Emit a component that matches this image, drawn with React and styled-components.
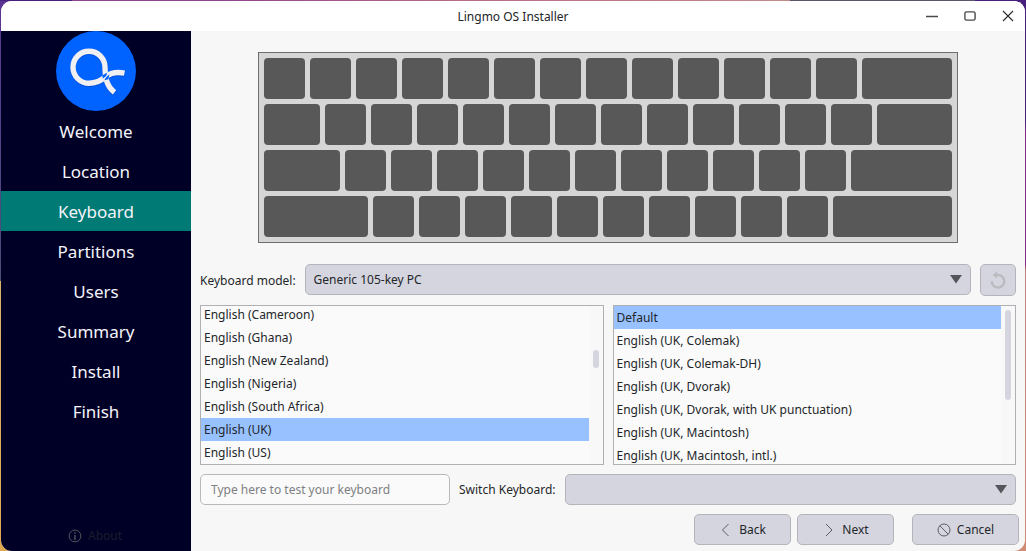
import React, { useState } from "react";
import styled, { createGlobalStyle } from "styled-components";

const GlobalStyle = createGlobalStyle`
  *, *::before, *::after { box-sizing: border-box; }
  body {
    margin: 0;
    font: 12px/17px "Noto Sans", "Open Sans", sans-serif;
    color: #232629;
  }
  button, input, select { font: inherit; color: inherit; }
`;

const Desktop = styled.div`
  min-height: 100vh;
  display: flex;
  padding: 1px 1px 0;
  background:
    linear-gradient(90deg, #46207a 0 7%, #8c4690 7% 22%, #b86c86 45%, #c08a8a 77%, #5c5468 77% 95%, #46207a 95%) top / 100% 1px no-repeat,
    linear-gradient(#5a3494, #4a5078 51%, #d8b468 51%, #e0a850) left / 50% 100% no-repeat,
    linear-gradient(#46207a 22%, #86288a 24% 48%, #c08078 49%, #d08c74) right / 50% 100% no-repeat;
`;

const Window = styled.div`
  flex: 1;
  min-width: 0;
  display: flex;
  flex-direction: column;
  overflow: hidden;
  border-radius: 11px;
  background: #f7f7f7;
`;

const TitleBar = styled.header`
  display: grid;
  grid-template-columns: 1fr auto 1fr;
  align-items: center;
  height: 30px;
  background: #fff;
`;

const Title = styled.h1`
  grid-column: 2;
  margin: 0;
  font-size: 12px;
  font-weight: 400;
`;

const WindowControls = styled.div`
  display: flex;
  justify-content: flex-end;
  gap: 4px;
`;

const ControlButton = styled.button`
  display: grid;
  place-items: center;
  width: 34px;
  height: 30px;
  padding: 0;
  border: 0;
  background: none;
`;

const Body = styled.div`
  flex: 1;
  display: flex;
`;

const Sidebar = styled.aside`
  flex: none;
  width: 190px;
  display: flex;
  flex-direction: column;
  align-items: center;
  background: #000026;
`;

const Steps = styled.ol`
  align-self: stretch;
  margin: 0;
  padding: 0;
  list-style: none;
`;

const Step = styled.li`
  height: 40px;
  line-height: 41px;
  font-size: 17px;
  text-align: center;
  color: #f4f4fa;
  background: ${(p) => (p.$current ? "#007a74" : "transparent")};
`;

const AboutButton = styled.button`
  display: flex;
  align-items: center;
  gap: 6px;
  height: 31px;
  margin-top: auto;
  padding: 0 2px 0 0;
  border: 0;
  background: none;
  color: #1d1d2b;
`;

const Page = styled.main`
  flex: 1;
  min-width: 0;
  display: flex;
  flex-direction: column;
  gap: 9px;
  padding: 21px 9px 6px;
`;

const Keyboard = styled.div`
  align-self: center;
  width: 700px;
  max-width: 100%;
  display: flex;
  flex-direction: column;
  gap: 5px;
  margin-bottom: 12px;
  padding: 5px;
  border: 1px solid #6e6e6e;
  background: #d6d6d6;
`;

const KeyRow = styled.div`
  display: flex;
  gap: 5px;
`;

const Key = styled.span`
  flex: ${(p) => (p.$fill ? "1 1 0" : "0 1 auto")};
  width: ${(p) => p.$width || 41}px;
  height: 41px;
  border-radius: 4px;
  background: #585858;
`;

const FormRow = styled.div`
  display: flex;
  align-items: center;
  gap: 9px;
`;

const SelectBox = styled.div`
  position: relative;
  flex: 1;
  height: ${(p) => p.$height}px;

  svg {
    position: absolute;
    right: 9px;
    top: 10px;
    pointer-events: none;
  }
`;

const Select = styled.select`
  display: block;
  appearance: none;
  width: 100%;
  height: 31px;
  padding: 0 28px 0 8px;
  border: 1px solid #b4b4ba;
  border-radius: 5px;
  background: #d5d5df;
`;

const TextInput = styled.input`
  width: 250px;
  height: 31px;
  padding: 0 10px;
  border: 1px solid #b9b9b9;
  border-radius: 5px;
  background: #fafafa;

  &::placeholder { color: #7d7f82; opacity: 1; }
`;

const Button = styled.button`
  display: flex;
  align-items: center;
  justify-content: center;
  gap: 6px;
  width: ${(p) => p.$width}px;
  height: ${(p) => p.$height || 31}px;
  padding: 0;
  border: 1px solid #b4b4ba;
  border-radius: 5px;
  background: #d5d5df;
`;

const Lists = styled.div`
  display: grid;
  grid-template-columns: 1fr 1fr;
  gap: 9px;
`;

const ListFrame = styled.div`
  display: flex;
  height: 160px;
  border: 1px solid #b0b0b2;
  background: #fafafa;
`;

const Options = styled.ul`
  flex: 1;
  display: flex;
  flex-direction: column;
  justify-content: ${(p) => (p.$scrolled ? "flex-end" : "flex-start")};
  margin: 0;
  padding: 0;
  overflow: hidden;
  list-style: none;
`;

const Option = styled.li`
  flex: none;
  height: 23px;
  padding: 0 3px;
  line-height: 23px;
  background: ${(p) => (p["aria-selected"] ? "#97c1ff" : "transparent")};
`;

const Track = styled.div`
  width: 14px;
  padding: ${(p) => p.$offset}px 4px 0;
  background: #f8f8f8;
`;

const Thumb = styled.div`
  height: ${(p) => p.$length}px;
  border-radius: 3px;
  background: #d5d5df;
`;

const Actions = styled.footer`
  display: flex;
  justify-content: flex-end;
  gap: 6px;
  margin-right: -3px;

  button:last-child { margin-left: 12px; }
`;

const steps = ["Welcome", "Location", "Keyboard", "Partitions", "Users", "Summary", "Install", "Finish"];

const keyRows = [
  { first: 41, count: 12 },
  { first: 56, count: 12 },
  { first: 76, count: 11 },
  { first: 104, count: 10 },
];

const layouts = [
  "English (Cameroon)",
  "English (Ghana)",
  "English (New Zealand)",
  "English (Nigeria)",
  "English (South Africa)",
  "English (UK)",
  "English (US)",
];

const variants = [
  "Default",
  "English (UK, Colemak)",
  "English (UK, Colemak-DH)",
  "English (UK, Dvorak)",
  "English (UK, Dvorak, with UK punctuation)",
  "English (UK, Macintosh)",
  "English (UK, Macintosh, intl.)",
];

function Icon({ width = 14, height = 14, stroke = "#5b5d63", strokeWidth = 1, children }) {
  return (
    <svg width={width} height={height} viewBox={`0 0 ${width} ${height}`} fill="none" stroke={stroke} strokeWidth={strokeWidth} aria-hidden="true">
      {children}
    </svg>
  );
}

function Arrow() {
  return (
    <svg width="12" height="10" viewBox="0 0 12 10" aria-hidden="true">
      <path d="M0 1h12L6 9.5z" fill="#55565c" />
    </svg>
  );
}

const ribbon = "M68.5 42.2C61 40.6 55 41.8 50 45.4C45 49.8 40.5 52.3 33 52.3A16 16 0 1 1 49 36.3C49.2 48 51 55.5 58.5 61.3";

function Logo() {
  return (
    <svg width="80" height="80" viewBox="0 0 80 80" fill="none" role="img" aria-label="Lingmo OS">
      <circle cx="40" cy="40" r="40" fill="#0062ff" />
      <path d={ribbon} stroke="#0048c4" strokeWidth="5.6" opacity="0.6" transform="translate(0 1)" />
      <path d={ribbon} stroke="#f0f0f2" strokeWidth="5.4" />
      <path d="M46.2 44.4L51.3 41.6L50 45.2L46.8 47.4z M50.4 46L53.4 43.2L52.4 48.2L48.2 49.2z" fill="#0062ff" />
    </svg>
  );
}

function OptionList({ label, items, value, onChange, scrolled, offset, length }) {
  return (
    <ListFrame>
      <Options role="listbox" aria-label={label} tabIndex={0} $scrolled={scrolled}>
        {items.map((item) => (
          <Option key={item} role="option" aria-selected={item === value} onClick={() => onChange(item)}>
            {item}
          </Option>
        ))}
      </Options>
      <Track $offset={offset}>
        <Thumb $length={length} />
      </Track>
    </ListFrame>
  );
}

export default function App() {
  const [layout, setLayout] = useState("English (UK)");
  const [variant, setVariant] = useState("Default");

  return (
    <Desktop>
      <GlobalStyle />
      <Window>
        <TitleBar>
          <Title>Lingmo OS Installer</Title>
          <WindowControls>
            <ControlButton aria-label="Minimize">
              <Icon stroke="#4a4a4a"><path d="M1 7.5h12" strokeWidth="1.4" /></Icon>
            </ControlButton>
            <ControlButton aria-label="Maximize">
              <Icon stroke="#4a4a4a"><rect x="1.9" y="2.9" width="10.2" height="8.2" rx="1.6" strokeWidth="1.4" /></Icon>
            </ControlButton>
            <ControlButton aria-label="Close">
              <Icon stroke="#303030"><path d="M2 2l10 10M12 2L2 12" strokeWidth="1.2" /></Icon>
            </ControlButton>
          </WindowControls>
        </TitleBar>
        <Body>
          <Sidebar>
            <Logo />
            <Steps>
              {steps.map((step) => (
                <Step key={step} $current={step === "Keyboard"} aria-current={step === "Keyboard" ? "step" : undefined}>
                  {step}
                </Step>
              ))}
            </Steps>
            <AboutButton>
              <Icon stroke="#55555f">
                <circle cx="7" cy="7" r="5.9" />
                <path d="M7 6v5M7 3.2v1.5" strokeWidth="1.4" />
              </Icon>
              About
            </AboutButton>
          </Sidebar>
          <Page>
            <Keyboard role="img" aria-label="Keyboard preview">
              {keyRows.map(({ first, count }) => (
                <KeyRow key={first}>
                  <Key $width={first} />
                  {Array.from({ length: count }, (_, i) => (
                    <Key key={i} />
                  ))}
                  <Key $fill />
                </KeyRow>
              ))}
            </Keyboard>
            <FormRow>
              <label htmlFor="model">Keyboard model:</label>
              <SelectBox $height={32}>
                <Select id="model">
                  <option>Generic 105-key PC</option>
                </Select>
                <Arrow />
              </SelectBox>
              <Button $width={36} $height={32} aria-label="Reset keyboard model">
                <Icon width={18} height={18} stroke="#bababf" strokeWidth={2.4}>
                  <path d="M2.7 10.3A6.3 6.3 0 1 0 9 4H7" />
                  <path d="M8 0.6V7.4L3.8 4z" fill="#bababf" stroke="none" />
                </Icon>
              </Button>
            </FormRow>
            <Lists>
              <OptionList label="Layout" items={layouts} value={layout} onChange={setLayout} scrolled offset={44} length={18} />
              <OptionList label="Variant" items={variants} value={variant} onChange={setVariant} offset={4} length={90} />
            </Lists>
            <FormRow>
              <TextInput aria-label="Keyboard test" placeholder="Type here to test your keyboard" />
              <label htmlFor="switch">Switch Keyboard:</label>
              <SelectBox $height={31}>
                <Select id="switch">
                  <option value="" />
                </Select>
                <Arrow />
              </SelectBox>
            </FormRow>
            <Actions>
              <Button $width={97}>
                <Icon><path d="M9.5 1L3.5 7l6 6" /></Icon>
                Back
              </Button>
              <Button $width={97}>
                <Icon><path d="M4 1l6 6-6 6" /></Icon>
                Next
              </Button>
              <Button $width={107}>
                <Icon>
                  <circle cx="7" cy="7" r="6" />
                  <path d="M2.8 2.8l8.4 8.4" />
                </Icon>
                Cancel
              </Button>
            </Actions>
          </Page>
        </Body>
      </Window>
    </Desktop>
  );
}
